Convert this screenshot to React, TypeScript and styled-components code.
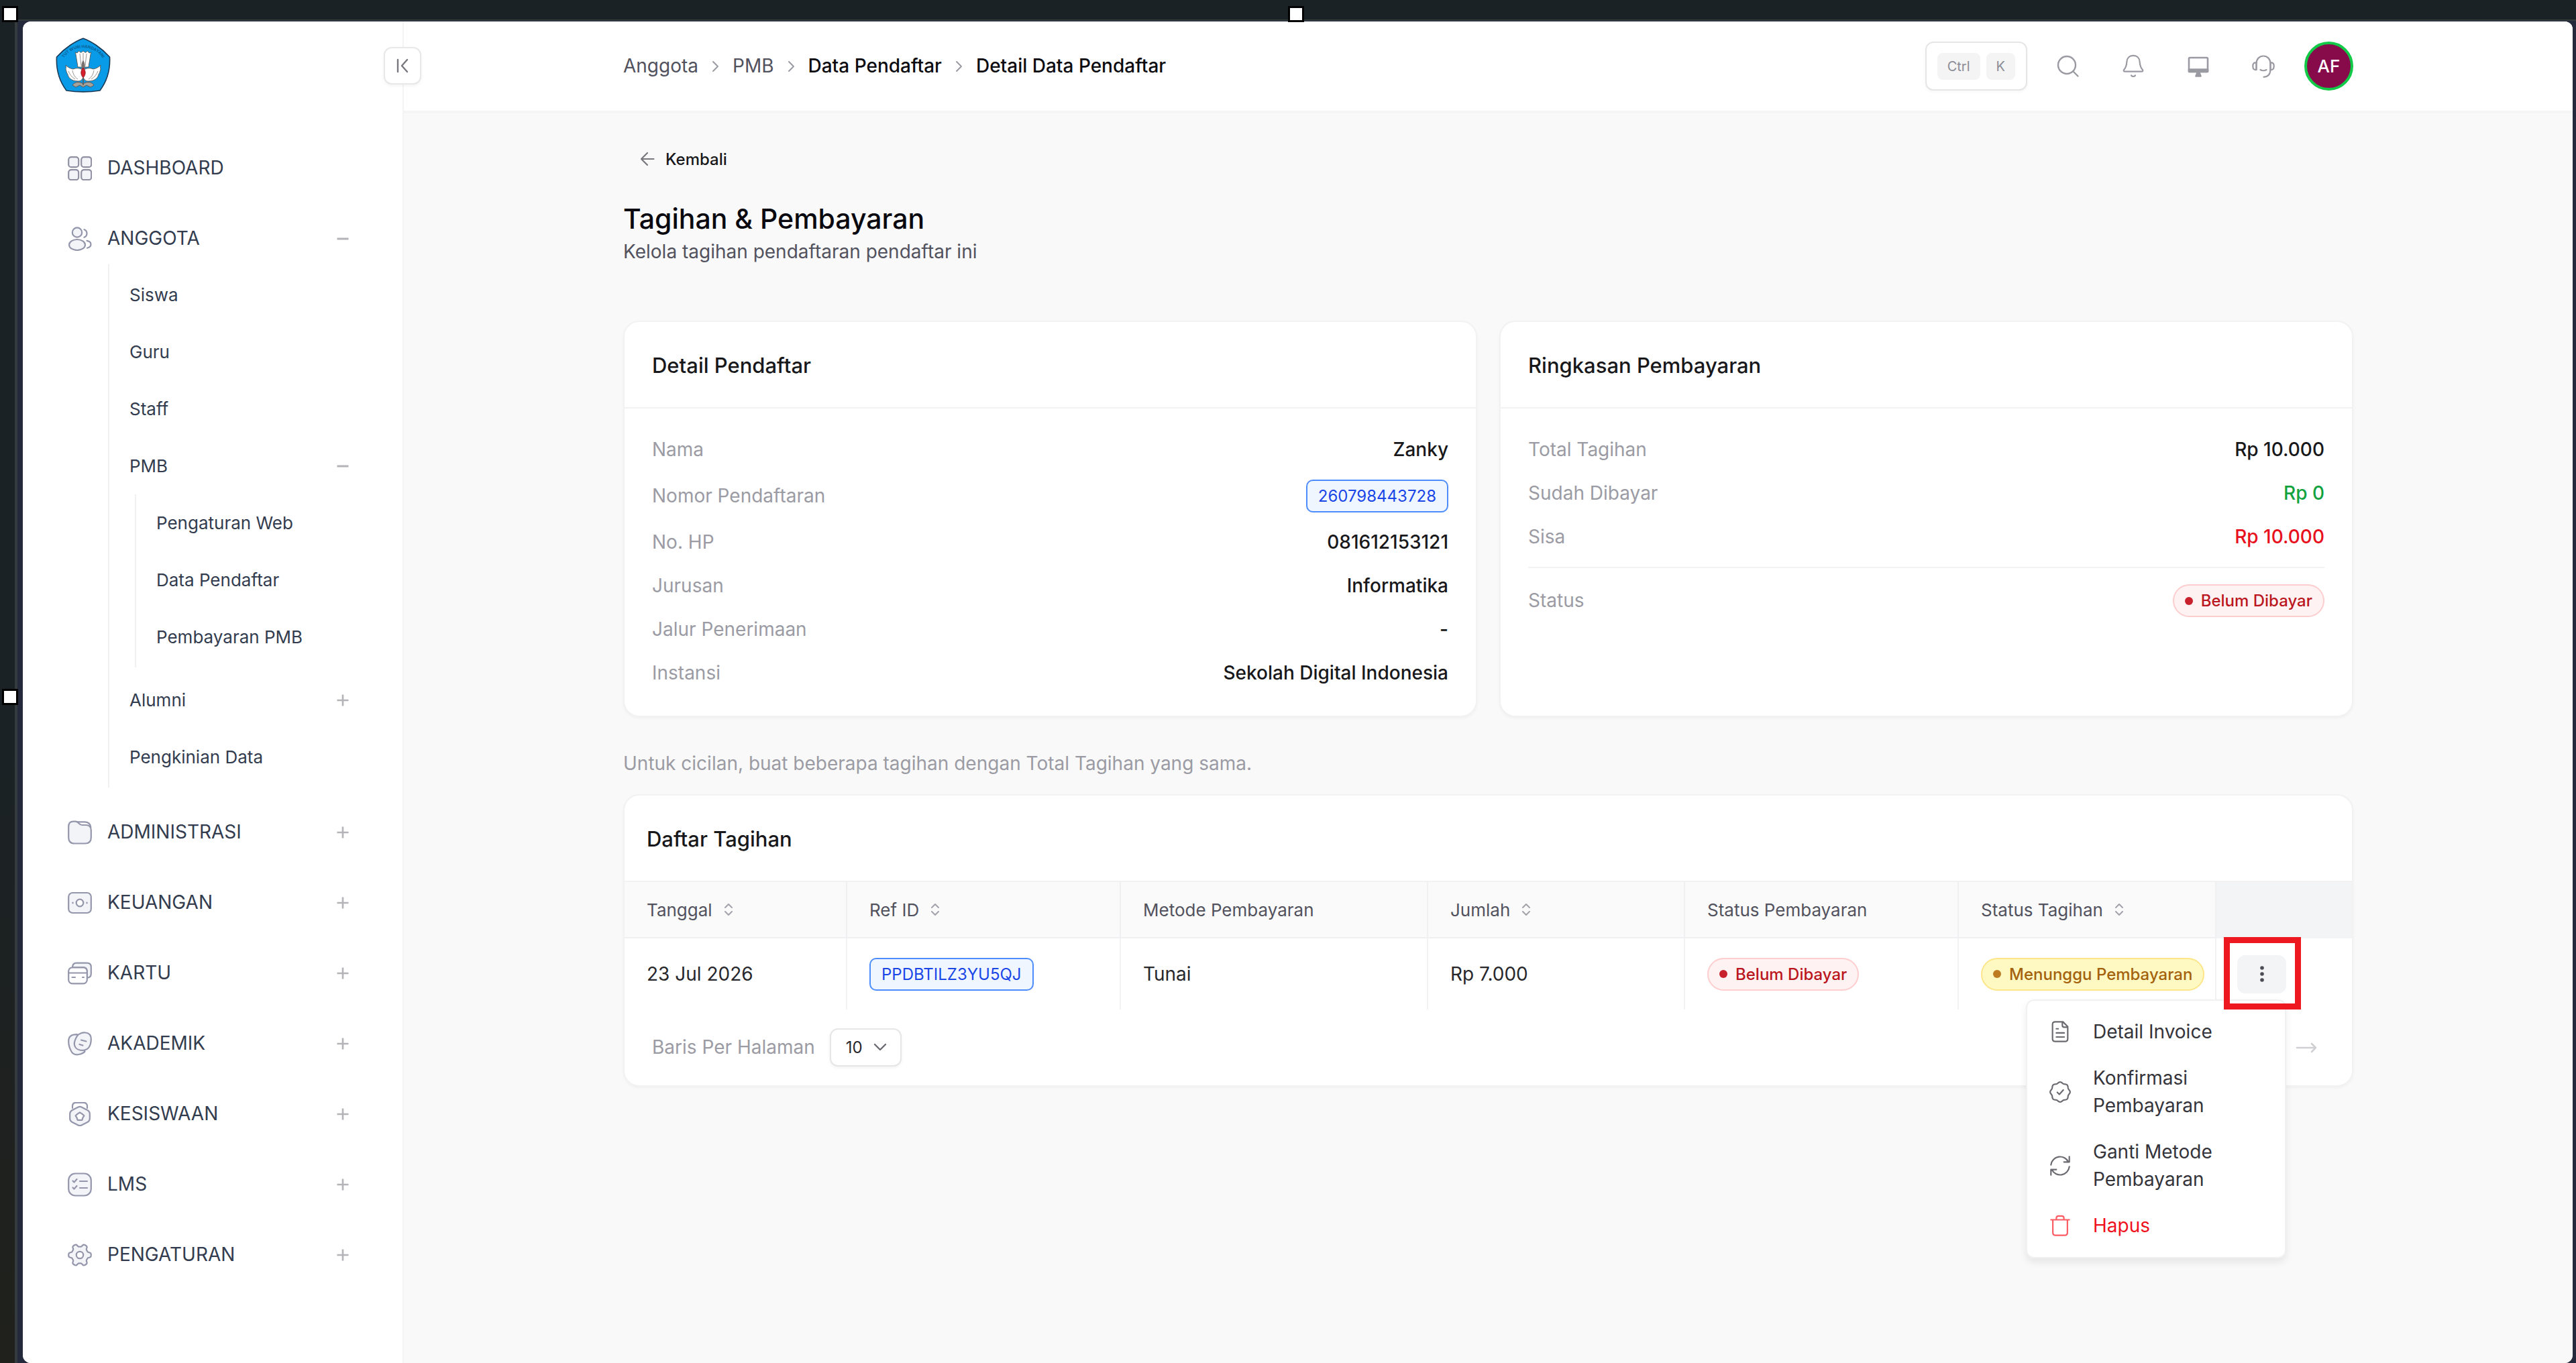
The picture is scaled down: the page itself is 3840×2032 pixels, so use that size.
import React from 'react';
import styled, { createGlobalStyle, css } from 'styled-components';

const GlobalStyle = createGlobalStyle`
  *, *::before, *::after { box-sizing: border-box; }
  body {
    margin: 0;
    font-family: Inter, "Liberation Sans", sans-serif;
    font-size: 28px;
    line-height: 41px;
    color: #18181b;
  }
  button, select { font: inherit; color: inherit; }
  button { background: none; border: 0; padding: 0; cursor: pointer; text-align: left; }
  a { color: inherit; text-decoration: none; }
  ul, ol, dl, dd { margin: 0; padding: 0; list-style: none; }
  h1, h2, p { margin: 0; }
  svg { display: block; flex: none; }
`;

/* ---------- Frame ---------- */

const Desktop = styled.div`
  position: relative;
  min-height: 100vh;
  padding: 29px 0 0 22px;
  background: linear-gradient(#1b2225, #1b2225 55%, #20211c);
`;

const Bezel = styled.div`
  padding: 1px 5px 0 8px;
  border-top: 2px solid #353b3d;
  border-left: 4px solid #353b3d;
  background: #24293b;
`;

const Window = styled.div`
  display: flex;
  min-height: calc(100vh - 32px);
  border-radius: 12px;
  overflow: hidden;
  background: #fff;
`;

const Handle = styled.span<{ $left: string; $top: string }>`
  position: absolute;
  left: ${p => p.$left};
  top: ${p => p.$top};
  width: 24px;
  height: 24px;
  border: 3px solid #000;
  background: #fff;
`;

/* ---------- Sidebar ---------- */

const Sidebar = styled.aside`
  position: relative;
  flex: 0 0 568px;
  border-right: 2px solid #f4f4f5;
  background: #fff;
`;

const Brand = styled.div`
  height: 136px;
  padding: 24px 0 0 49px;
`;

const CollapseButton = styled.button`
  position: absolute;
  top: 38px;
  right: -28px;
  display: grid;
  place-items: center;
  width: 56px;
  height: 56px;
  border: 2px solid #e8e8ea;
  border-radius: 12px;
  background: #fff;
  box-shadow: 0 2px 4px rgba(0, 0, 0, 0.05);
`;

const Nav = styled.nav`
  padding: 44px 79px 0 67px;
`;

const Groups = styled.ul`
  display: flex;
  flex-direction: column;
  gap: 28px;
`;

const navRow = css`
  display: flex;
  align-items: center;
  width: 100%;
  color: #323c4e;
`;

const GroupRow = styled.button`
  ${navRow}
  gap: 23px;
  height: 77px;
`;

const SubRow = styled.button`
  ${navRow}
  height: 85px;
  font-size: 26px;
`;

const Grow = styled.span`
  flex: 1;
`;

const SubList = styled.ul`
  margin-left: 60px;
  padding: 3px 0 3px 30px;
  border-left: 2px solid #f1f1f3;
`;

const SubSubList = styled.ul`
  margin: 0 0 6px 8px;
  padding: 0 0 3px 30px;
  border-left: 2px solid #f1f1f3;
`;

/* ---------- Main area ---------- */

const Main = styled.div`
  flex: 1;
  min-width: 0;
  background: #f9f9f9;
`;

const TopBar = styled.header`
  height: 137px;
  border-bottom: 4px solid #f5f5f6;
  background: #fff;
`;

const Container = styled.div`
  width: 100%;
  max-width: 2579px;
  margin: 0 auto;
`;

const TopBarInner = styled(Container)`
  display: flex;
  align-items: center;
  justify-content: space-between;
  height: 100%;
`;

const Crumbs = styled.ol`
  display: flex;
  align-items: center;
  gap: 20px;
`;

const Crumb = styled.li<{ $strong?: boolean }>`
  display: flex;
  align-items: center;
  gap: 20px;
  font-weight: ${p => (p.$strong ? 500 : 400)};
  color: ${p => (p.$strong ? '#0c0c10' : '#52525e')};
`;

const Tools = styled.div`
  display: flex;
  align-items: center;
  gap: 37px;
`;

const IconRow = styled.div`
  display: flex;
  gap: 49px;
`;

const IconButton = styled.button`
  display: grid;
  place-items: center;
  width: 48px;
  height: 48px;
`;

const Shortcut = styled.button`
  display: flex;
  align-items: center;
  gap: 9px;
  height: 73px;
  padding: 0 16px;
  border: 2px solid #e6e6e8;
  border-radius: 12px;
  background: #fff;
  box-shadow: 0 2px 4px rgba(0, 0, 0, 0.04);
`;

const Key = styled.kbd`
  padding: 0 15px;
  border-radius: 8px;
  background: #f4f4f5;
  font-family: inherit;
  font-size: 20px;
  line-height: 40px;
  color: #8b8d96;
`;

const Avatar = styled.button`
  width: 73px;
  height: 73px;
  border: 4px solid #12c948;
  border-radius: 50%;
  background: #870b4b;
  color: #fff;
  font-size: 26px;
  font-weight: 500;
  text-align: center;
`;

const Content = styled(Container)`
  padding: 48px 0 80px;
`;

const BackLink = styled.a`
  display: flex;
  align-items: center;
  gap: 16px;
  width: max-content;
  height: 40px;
  padding-left: 25px;
  font-size: 24px;
  font-weight: 500;
`;

const Title = styled.h1`
  margin-top: 41px;
  font-size: 41px;
  line-height: 57px;
  font-weight: 500;
  color: #09090f;
`;

const Subtitle = styled.p`
  color: #52525e;
`;

const Cards = styled.div`
  display: grid;
  grid-template-columns: 1fr 1fr;
  gap: 33px;
  margin-top: 82px;
`;

const Card = styled.section`
  border: 2px solid #f2f2f3;
  border-radius: 24px;
  background: #fff;
  box-shadow: 0 2px 4px rgba(0, 0, 0, 0.04);
`;

const CardTitle = styled.h2<{ $inset?: number }>`
  padding: 44px ${p => p.$inset ?? 41}px 42px;
  border-bottom: 2px solid #f2f2f3;
  font-size: 31px;
  line-height: 41px;
  font-weight: 500;
`;

const Details = styled.dl`
  display: flex;
  flex-direction: column;
  gap: 24px;
  padding: 41px 41px 43px;
`;

const DetailRow = styled.div<{ $divided?: boolean }>`
  display: flex;
  align-items: center;
  justify-content: space-between;
  ${p => p.$divided && 'padding-top: 24px; border-top: 2px solid #f2f2f3;'}
`;

const Term = styled.dt`
  color: #9b9ba4;
`;

const Value = styled.dd<{ $color?: string }>`
  color: ${p => p.$color ?? '#18181b'};
  font-weight: 500;
`;

const Code = styled.span`
  display: block;
  width: max-content;
  padding: 0 16px;
  border: 2px solid #4d8dfb;
  border-radius: 10px;
  background: #eff6ff;
  font-size: 24px;
  line-height: 45px;
  font-weight: 400;
  color: #1a46e8;
`;

const tones = {
  red: { bg: '#fef2f2', border: '#fecdce', text: '#bb1620', dot: '#c8202c' },
  yellow: { bg: '#fef9c2', border: '#fde68a', text: '#a4620c', dot: '#bd7b22' },
};

const Pill = styled.span<{ $tone: keyof typeof tones }>`
  display: flex;
  align-items: center;
  gap: 12px;
  width: max-content;
  padding: 0 16px;
  border: 2px solid ${p => tones[p.$tone].border};
  border-radius: 25px;
  background: ${p => tones[p.$tone].bg};
  font-size: 24px;
  line-height: 45px;
  font-weight: 500;
  color: ${p => tones[p.$tone].text};

  &::before {
    content: '';
    width: 12px;
    height: 12px;
    border-radius: 50%;
    background: ${p => tones[p.$tone].dot};
  }
`;

const Note = styled.p`
  margin: 49px 0 25px;
  color: #9b9ba4;
`;

/* ---------- Bill table ---------- */

const Table = styled.table`
  width: 100%;
  border-collapse: separate;
  border-spacing: 0;
  table-layout: fixed;
`;

const cell = css`
  padding: 0 0 0 33px;
  text-align: left;
  font-weight: 400;
`;

const Th = styled.th`
  ${cell}
  height: 84px;
  border-right: 2px solid #f0f0f2;
  border-bottom: 2px solid #f0f0f2;
  background: #fafafa;
  font-size: 26px;
  color: #52525e;
`;

const ThAction = styled.td`
  background: #f3f4f6;
`;

const Td = styled.td`
  ${cell}
  height: 106px;
  border-right: 2px solid #f2f2f3;
  color: #27272c;
`;

const TdAction = styled.td`
  padding: 0 0 0 31px;
`;

const SortButton = styled.button`
  display: flex;
  align-items: center;
  gap: 18px;
`;

const ActionAnchor = styled.div`
  position: relative;
  width: 73px;
`;

const DotsButton = styled.button`
  display: grid;
  place-items: center;
  width: 73px;
  height: 57px;
  border-radius: 12px;
  background: #f3f4f6;
`;

const Highlight = styled.span`
  position: absolute;
  inset: -27px -22px -24px -20px;
  border: 9px solid #ed1820;
  z-index: 2;
  pointer-events: none;
`;

const Menu = styled.ul`
  position: absolute;
  top: 66px;
  right: 0;
  z-index: 1;
  width: 388px;
  padding: 12px 0;
  border: 2px solid #f1f1f3;
  border-radius: 12px;
  background: #fff;
  box-shadow: 0 6px 12px rgba(0, 0, 0, 0.08);
`;

const MenuItem = styled.button<{ $danger?: boolean }>`
  display: flex;
  align-items: center;
  gap: 32px;
  width: 100%;
  padding: 14px 32px;
  color: ${p => (p.$danger ? '#f0101c' : '#34343a')};
`;

const Footer = styled.div`
  display: flex;
  align-items: center;
  justify-content: space-between;
  height: 113px;
  padding: 0 52px 0 41px;
`;

const PageSize = styled.label`
  display: flex;
  align-items: center;
  gap: 22px;
  color: #9b9ba4;
`;

const SelectBox = styled.span`
  position: relative;
  display: block;

  svg {
    position: absolute;
    right: 22px;
    top: 18px;
    pointer-events: none;
  }
`;

const Select = styled.select`
  appearance: none;
  display: block;
  width: 107px;
  height: 57px;
  padding: 0 22px;
  border: 2px solid #e6e6e8;
  border-radius: 12px;
  background: #fff;
  box-shadow: 0 2px 4px rgba(0, 0, 0, 0.05);
  font-size: 24px;
  color: #27272c;
`;

/* ---------- Icons ---------- */

type DrawProps = { size?: number; color?: string; width?: number; fill?: string; box?: number; children: React.ReactNode };

const Draw = ({ size = 36, box = 36, color = '#9496ab', width = 2.2, fill = 'none', children }: DrawProps) => (
  <svg width={size} height={size} viewBox={`0 0 ${box} ${box}`} fill={fill} stroke={color} strokeWidth={width} strokeLinecap="round" strokeLinejoin="round" aria-hidden="true">
    {children}
  </svg>
);

/* Closed outline around (18, 18) whose radius depends on the angle. */
const ring = (radius: (angle: number) => number) =>
  Array.from({ length: 120 }, (_, i) => {
    const a = (i / 120) * Math.PI * 2;
    const r = radius(a);
    return `${i ? 'L' : 'M'}${(18 + r * Math.cos(a)).toFixed(2)} ${(18 + r * Math.sin(a)).toFixed(2)}`;
  }).join('') + 'z';

const gearPath = ring(a => 14.6 + 2.2 * Math.tanh(2.2 * Math.cos(a * 6)));
const badgePath = ring(a => 14.8 + Math.cos(a * 8) * 0.9);

const soft = '#f3f4f8';

const navIcons: Record<string, React.ReactNode> = {
  dashboard: (
    <Draw fill={soft} color="#8f90a2">
      <rect x="1.2" y="1.2" width="15" height="15" rx="4" />
      <rect x="20.2" y="1.2" width="15" height="15" rx="4" />
      <rect x="1.2" y="20.2" width="15" height="15" rx="4" />
      <rect x="20.2" y="20.2" width="15" height="15" rx="4" />
    </Draw>
  ),
  people: (
    <Draw>
      <circle cx="14" cy="8.5" r="7.2" fill={soft} />
      <ellipse cx="14" cy="27" rx="12" ry="8" fill={soft} />
      <path d="M24.5 4.2a6.2 6.2 0 0 1 0 11.6M28.5 20.8c3.8.8 6 2.8 6 5.4s-2 4.6-5.5 5.5" />
    </Draw>
  ),
  folder: (
    <Draw>
      <path fill={soft} d="M1.2 9.5C1.2 4 3.5 1.6 8.5 1.6h2.8c2.8 0 4 1 5.5 3 1.3 1.7 2.2 2.4 4.7 2.4h5.5c5.5 0 7.8 2.5 7.8 8v10.5c0 6-3 9-9 9H10c-6 0-8.8-3-8.8-9z" />
      <path d="M15 2.3h10c5 0 8.5 2 9.3 7.7" />
    </Draw>
  ),
  money: (
    <Draw>
      <rect x="1.2" y="3" width="33.6" height="30" rx="6" fill={soft} />
      <circle cx="18" cy="18" r="5.3" fill="#fff" />
      <path d="M7.5 17.5v1M28.5 17.5v1" />
    </Draw>
  ),
  cards: (
    <Draw>
      <path fill={soft} d="M7 9.5C7 5 9 2.6 13 2.6h15.5c4.2 0 6.3 2 6.3 6.2v9.7c0 4-1.8 6-6 6.1V15c0-4-2-5.9-6-5.9z" />
      <rect x="1.2" y="9.3" width="27.6" height="24" rx="5.5" fill="#fff" />
      <path d="M1.5 17.5h27M6.5 24h4.5M22 24h2" />
    </Draw>
  ),
  notes: (
    <Draw>
      <path fill={soft} d="M14 4.2C5 4 1.2 7.5 1.2 14.5c0 5 1.8 11 4.3 15.2 2.3 4 6 5.3 11 4.3 4-.8 7-2 9-4.5z" />
      <path fill={soft} d="M14 6.5c2-3.5 8-5.5 12.5-5 5 .5 8.2 4 8.3 9.5 0 4-.9 9-3.3 12.5-2.5 3.7-8.5 5-13.5 4-4.5-1-8-4.5-8.200-9 0-4 2-8.500 4.200-12z" />
      <path d="M20 12.5l7.5 2M17.5 19l5 1.5" />
    </Draw>
  ),
  medal: (
    <Draw>
      <path d="M7 9V6c0-3.2 2-5.2 5.5-5.2h11C27 .8 29 2.8 29 6v3" />
      <path fill={soft} d="M15 7.8c2-1.2 4-1.2 6 0l8.7 4.4c2 1.2 3.1 2.8 3.1 5.2v7.2c0 2.3-1 4-3 5.1L21 34.2c-2 1.2-4 1.2-6 0l-8.8-4.5c-2-1.1-3-2.8-3-5.1v-7.2c0-2.400 1.100-4 3.100-5.200z" />
      <path fill="#fff" d="M18 15.5l3.4 2.2 3 2.6-2 3.1-1 3.4h-6.800l-1-3.400-2-3.100 3-2.600z" />
    </Draw>
  ),
  checklist: (
    <Draw>
      <rect x="1.2" y="1.5" width="33.6" height="33" rx="10" fill={soft} />
      <path d="M7.5 12.5l2 2 4-4.5M7.5 22.5l2 2 4-4.5M18 13h11M18 23h11" />
    </Draw>
  ),
  gear: (
    <Draw>
      <path fill={soft} d={gearPath} />
      <circle cx="18" cy="18" r="5.2" fill="#fff" />
    </Draw>
  ),
};

const Plus = () => (
  <Draw size={20} box={20} color="#b3b3b8" width={2.6}><path d="M1.5 10h17M10 1.5v17" strokeLinecap="butt" /></Draw>
);
const Minus = () => (
  <Draw size={20} box={20} color="#b3b3b8" width={3}><path d="M1.5 10h17" strokeLinecap="butt" /></Draw>
);
const ChevronRight = () => (
  <svg width="11" height="18" viewBox="0 0 11 18" fill="none" stroke="#9b9ba4" strokeWidth="2" strokeLinecap="round" strokeLinejoin="round" aria-hidden="true"><path d="M2 2l7 7-7 7" /></svg>
);
const Sort = () => (
  <svg width="12" height="20" viewBox="0 0 12 20" fill="none" stroke="#a2a2aa" strokeWidth="2" strokeLinecap="round" strokeLinejoin="round" aria-hidden="true"><path d="M1 7l5-5 5 5M1 13l5 5 5-5" /></svg>
);

const grey = '#9a9aa2';
const SearchIcon = () => (
  <Draw color={grey} width={2.4}><circle cx="16" cy="16" r="13" /><path d="M25.5 25.5l7 7" /></Draw>
);
const BellIcon = () => (
  <Draw color={grey} width={2.2}><path d="M18 1.8c-6 0-9.3 4.2-9.6 9.2-.3 5-.7 8-3.9 11.5-1.5 1.7-.8 3.2 1.3 3.2h24.4c2.1 0 2.8-1.5 1.3-3.200-3.200-3.500-3.600-6.500-3.900-11.500-.3-5-3.600-9.200-9.600-9.200zM15 31.500c1.500 2 4.500 2 6 0" /></Draw>
);
const MonitorIcon = () => (
  <Draw color={grey} width={2.6}><rect x="4" y="5" width="28" height="21" rx="1.5" /><path d="M4 22.5h28v3.5H4zM14.5 32.5h7l-2-5h-3z" fill={grey} /></Draw>
);
const HeadsetIcon = () => (
  <Draw color={grey} width={2.2}>
    <path d="M7.5 23V14C7.5 7 12 2.5 18 2.5S28.5 7 28.5 14v8c0 7-3.5 11.5-10 11.8M13.5 23c2.5 1.6 6.5 1.6 9 0" />
    <path d="M7.5 12.5c-3.5-.5-5.2 1-5.2 5.2s1.7 5.7 5.2 5.3zM28.5 12.5c3.5-.5 5.2 1 5.2 5.2s-1.7 5.7-5.2 5.3z" />
  </Draw>
);

const ink = '#6a6a70';
const FileIcon = () => (
  <Draw size={34} color={ink} width={2.3}><path d="M10 2.5h12.5L30 10v19c0 3-1.5 4.5-4.5 4.5h-15C7.5 33.5 6 32 6 29V6.500c0-2.500 1.500-4 4-4zM21.500 2.500V8c0 2.200.8 3 3 3H30M12 13.500h3M12 20h12.500M12 26.500h12.500" /></Draw>
);
const VerifiedIcon = () => (
  <Draw size={34} color={ink} width={2.3}><path d={badgePath} /><path d="M13.5 18.5l3.3 3.3 6.2-7" /></Draw>
);
const RefreshIcon = () => (
  <Draw size={34} color={ink} width={2.3}><path d="M3.5 16.5A14.5 14.5 0 0 1 31 12M32.5 3.5V12H24M32.5 19.5A14.5 14.5 0 0 1 5 24M3.5 32.5V24H12" /></Draw>
);
const TrashIcon = () => (
  <Draw size={34} color="#fb5c64" width={2.3}><path d="M3.5 9h29M12 9V6.5C12 4 13 3 15.5 3h5C23 3 24 4 24 6.5V9M6.5 9v20c0 3 1.5 4.5 4.5 4.5h14c3 0 4.5-1.5 4.5-4.5V9" /></Draw>
);

const Logo = () => (
  <svg width="82" height="82" viewBox="0 0 82 82" role="img" aria-label="Tut Wuri Handayani">
    <defs><path id="motto" d="M12 31C25 10 57 10 70 31" /></defs>
    <path d="M41 1.2C52 5 68 15 80.5 29c1 18-4 36-14.5 50-16 2.4-34 2.4-50 0C5.5 65 .5 47 1.5 29 14 15 30 5 41 1.2z" fill="#0a9be8" stroke="#1b3a55" strokeWidth="1.6" />
    <text fontSize="6" fontWeight="700" fill="#0c5f94"><textPath href="#motto" startOffset="50%" textAnchor="middle">TUT WURI HANDAYANI</textPath></text>
    <g fill="#fff" stroke="#59544f" strokeWidth="0.9" strokeLinejoin="round">
      <path d="M33 44L30 25l-1-3 3 1 2.5-3 3 2.5L41 20l3.5 2.5 3-2.5 2.5 3 3-1-1 3-3 19z" />
      <path d="M38 47c-3-1.5-7-2-12 0-6-1-10.5-5-11-6 1 4 0 5 0 6 1 3 1 5 3 8 1 4 4 10 16 10 3 0 5-2 7-5 2 3 4 5 7 5 12 0 15-6 16-10 2-3 2-5 3-8 0-1-1-2 0-6-.5 1-5 5-11 6-5-2-9-1.500-12 0l-3-4z" />
      <path d="M25 71c3-5 10-6 16-2 6-4 13-3 16 2l-5 3-6-3-5 3-5-3-6 3z" fill="#a5a29b" />
    </g>
    <path d="M36 24l2 18M41 23v15M46 24l-2 18M19 50c2 5 5 9 10 12M25 49c1 5 3 10 8 13M63 50c-2 5-5 9-10 12M57 49c-1 5-3 10-8 13" stroke="#8d8781" strokeWidth="0.9" fill="none" />
    <path d="M41 34c2.5 3 3 8 2.5 14h-5c-.5-6 0-11 2.5-14z" fill="#77706c" />
    <path d="M41 45c4 4 4.5 10 0 15-4.5-5-4-11 0-15z" fill="#d3202c" stroke="#7e1a22" strokeWidth="0.8" />
    <path d="M41 60v11" stroke="#5b5753" strokeWidth="1.5" />
  </svg>
);

/* ---------- Data ---------- */

const lowerGroups = [
  ['folder', 'ADMINISTRASI'],
  ['money', 'KEUANGAN'],
  ['cards', 'KARTU'],
  ['notes', 'AKADEMIK'],
  ['medal', 'KESISWAAN'],
  ['checklist', 'LMS'],
  ['gear', 'PENGATURAN'],
];

const crumbs = [
  { label: 'Anggota' },
  { label: 'PMB' },
  { label: 'Data Pendaftar', strong: true },
  { label: 'Detail Data Pendaftar', strong: true },
];

const columns = [
  { label: 'Tanggal', sort: true, width: 332 },
  { label: 'Ref ID', sort: true, width: 408 },
  { label: 'Metode Pembayaran', width: 458 },
  { label: 'Jumlah', sort: true, width: 383 },
  { label: 'Status Pembayaran', width: 408 },
  { label: 'Status Tagihan', sort: true, width: 384 },
];
const columnTotal = 2575;

/* ---------- App ---------- */

const SideNav = () => (
  <Sidebar>
    <Brand><Logo /></Brand>
    <CollapseButton aria-label="Tutup menu">
      <svg width="20" height="22" viewBox="0 0 20 22" fill="none" stroke="#77777e" strokeWidth="2.4" strokeLinecap="round" strokeLinejoin="round" aria-hidden="true">
        <path d="M3 2v18M17 2l-8 9 8 9" />
      </svg>
    </CollapseButton>
    <Nav>
      <Groups>
        <li><GroupRow>{navIcons.dashboard}DASHBOARD</GroupRow></li>
        <li>
          <GroupRow>{navIcons.people}ANGGOTA<Grow /><Minus /></GroupRow>
          <SubList>
            <li><SubRow>Siswa</SubRow></li>
            <li><SubRow>Guru</SubRow></li>
            <li><SubRow>Staff</SubRow></li>
            <li>
              <SubRow>PMB<Grow /><Minus /></SubRow>
              <SubSubList>
                <li><SubRow>Pengaturan Web</SubRow></li>
                <li><SubRow>Data Pendaftar</SubRow></li>
                <li><SubRow>Pembayaran PMB</SubRow></li>
              </SubSubList>
            </li>
            <li><SubRow>Alumni<Grow /><Plus /></SubRow></li>
            <li><SubRow>Pengkinian Data</SubRow></li>
          </SubList>
        </li>
        {lowerGroups.map(([icon, label]) => (
          <li key={label}><GroupRow>{navIcons[icon]}{label}<Grow /><Plus /></GroupRow></li>
        ))}
      </Groups>
    </Nav>
  </Sidebar>
);

const Header = () => (
  <TopBar>
    <TopBarInner>
      <nav aria-label="Breadcrumb">
        <Crumbs>
          {crumbs.map((c, i) => (
            <Crumb key={c.label} $strong={c.strong}>
              {i > 0 && <ChevronRight />}
              <a href="#">{c.label}</a>
            </Crumb>
          ))}
        </Crumbs>
      </nav>
      <Tools>
        <Shortcut><Key>Ctrl</Key><Key>K</Key></Shortcut>
        <IconRow>
          <IconButton aria-label="Cari"><SearchIcon /></IconButton>
          <IconButton aria-label="Notifikasi"><BellIcon /></IconButton>
          <IconButton aria-label="Layar"><MonitorIcon /></IconButton>
          <IconButton aria-label="Bantuan"><HeadsetIcon /></IconButton>
        </IconRow>
        <Avatar>AF</Avatar>
      </Tools>
    </TopBarInner>
  </TopBar>
);

const RegistrantCard = () => (
  <Card>
    <CardTitle>Detail Pendaftar</CardTitle>
    <Details>
      <DetailRow><Term>Nama</Term><Value>Zanky</Value></DetailRow>
      <DetailRow><Term>Nomor Pendaftaran</Term><Value><Code>260798443728</Code></Value></DetailRow>
      <DetailRow><Term>No. HP</Term><Value>081612153121</Value></DetailRow>
      <DetailRow><Term>Jurusan</Term><Value>Informatika</Value></DetailRow>
      <DetailRow><Term>Jalur Penerimaan</Term><Value>-</Value></DetailRow>
      <DetailRow><Term>Instansi</Term><Value>Sekolah Digital Indonesia</Value></DetailRow>
    </Details>
  </Card>
);

const SummaryCard = () => (
  <Card>
    <CardTitle>Ringkasan Pembayaran</CardTitle>
    <Details>
      <DetailRow><Term>Total Tagihan</Term><Value>Rp 10.000</Value></DetailRow>
      <DetailRow><Term>Sudah Dibayar</Term><Value $color="#12a340">Rp 0</Value></DetailRow>
      <DetailRow><Term>Sisa</Term><Value $color="#e7101c">Rp 10.000</Value></DetailRow>
      <DetailRow $divided><Term>Status</Term><Value><Pill $tone="red">Belum Dibayar</Pill></Value></DetailRow>
    </Details>
  </Card>
);

const BillTable = () => (
  <Table>
    <colgroup>
      {columns.map(c => <col key={c.label} style={{ width: `${(c.width / columnTotal) * 100}%` }} />)}
      <col />
    </colgroup>
    <thead>
      <tr>
        {columns.map(c => (
          <Th key={c.label} scope="col">
            {c.sort ? <SortButton>{c.label}<Sort /></SortButton> : c.label}
          </Th>
        ))}
        <ThAction />
      </tr>
    </thead>
    <tbody>
      <tr>
        <Td>23 Jul 2026</Td>
        <Td><Code>PPDBTILZ3YU5QJ</Code></Td>
        <Td>Tunai</Td>
        <Td>Rp 7.000</Td>
        <Td><Pill $tone="red">Belum Dibayar</Pill></Td>
        <Td><Pill $tone="yellow">Menunggu Pembayaran</Pill></Td>
        <TdAction>
          <ActionAnchor>
            <DotsButton aria-label="Aksi">
              <svg width="8" height="26" viewBox="0 0 8 26" fill="#4c4d54" aria-hidden="true">
                <circle cx="4" cy="4" r="2.8" /><circle cx="4" cy="13" r="2.8" /><circle cx="4" cy="22" r="2.8" />
              </svg>
            </DotsButton>
            <Menu>
              <li><MenuItem><FileIcon />Detail Invoice</MenuItem></li>
              <li><MenuItem><VerifiedIcon />Konfirmasi Pembayaran</MenuItem></li>
              <li><MenuItem><RefreshIcon />Ganti Metode Pembayaran</MenuItem></li>
              <li><MenuItem $danger><TrashIcon />Hapus</MenuItem></li>
            </Menu>
            <Highlight />
          </ActionAnchor>
        </TdAction>
      </tr>
    </tbody>
  </Table>
);

export default function App() {
  return (
    <Desktop>
      <GlobalStyle />
      <Bezel>
        <Window>
          <SideNav />
          <Main>
            <Header />
            <Content as="main">
              <BackLink href="#">
                <svg width="22" height="22" viewBox="0 0 22 22" fill="none" stroke="#77777e" strokeWidth="2.2" strokeLinecap="round" strokeLinejoin="round" aria-hidden="true"><path d="M20.5 11H2M11 2l-9 9 9 9" /></svg>
                Kembali
              </BackLink>
              <Title>Tagihan &amp; Pembayaran</Title>
              <Subtitle>Kelola tagihan pendaftaran pendaftar ini</Subtitle>
              <Cards>
                <RegistrantCard />
                <SummaryCard />
              </Cards>
              <Note>Untuk cicilan, buat beberapa tagihan dengan Total Tagihan yang sama.</Note>
              <Card>
                <CardTitle $inset={33}>Daftar Tagihan</CardTitle>
                <BillTable />
                <Footer>
                  <PageSize>
                    Baris Per Halaman
                    <SelectBox>
                      <Select defaultValue="10"><option>10</option></Select>
                      <svg width="20" height="20" viewBox="0 0 20 20" fill="none" stroke="#6a6a70" strokeWidth="2.4" strokeLinecap="round" strokeLinejoin="round" aria-hidden="true"><path d="M2 6l8 8 8-8" /></svg>
                    </SelectBox>
                  </PageSize>
                  <IconRow>
                    <button aria-label="Berikutnya">
                      <svg width="32" height="16" viewBox="0 0 32 16" fill="none" stroke="#d0d0d4" strokeWidth="2.6" strokeLinecap="round" strokeLinejoin="round" aria-hidden="true"><path d="M2 8h28M24 2l6 6-6 6" /></svg>
                    </button>
                  </IconRow>
                </Footer>
              </Card>
            </Content>
          </Main>
        </Window>
      </Bezel>
      <Handle $left="3px" $top="9px" />
      <Handle $left="50%" $top="9px" />
      <Handle $left="3px" $top="calc(50% + 11px)" />
    </Desktop>
  );
}
